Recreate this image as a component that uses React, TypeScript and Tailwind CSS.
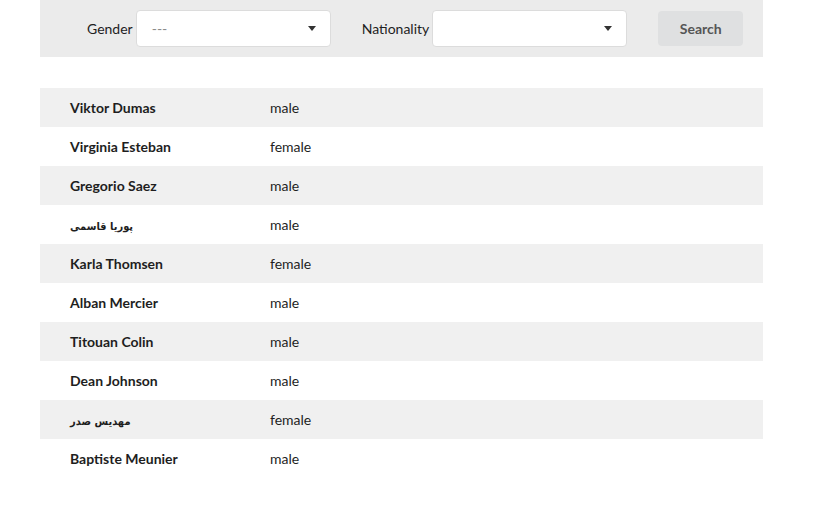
import React from "react";

const people: { name: string; gender: string; rtl?: boolean }[] = [
  { name: "Viktor Dumas", gender: "male" },
  { name: "Virginia Esteban", gender: "female" },
  { name: "Gregorio Saez", gender: "male" },
  { name: "پوریا قاسمی", gender: "male", rtl: true },
  { name: "Karla Thomsen", gender: "female" },
  { name: "Alban Mercier", gender: "male" },
  { name: "Titouan Colin", gender: "male" },
  { name: "Dean Johnson", gender: "male" },
  { name: "مهدیس صدر", gender: "female", rtl: true },
  { name: "Baptiste Meunier", gender: "male" },
];

function Caret() {
  return (
    <svg width="8" height="5" viewBox="0 0 8 5" className="shrink-0">
      <path d="M0 0h8L4 5z" fill="#333" />
    </svg>
  );
}

function Select({ value }: { value?: string }) {
  return (
    <div className="flex h-[37px] w-[195px] items-center justify-between rounded-[4px] border border-[#dcdcdc] bg-white pl-[15px] pr-[14px]">
      <span className="text-[14px] text-[#8a8a8a]">{value ?? ""}</span>
      <Caret />
    </div>
  );
}

export default function App() {
  return (
    <div className="min-h-screen bg-white font-['Lato','DejaVu_Sans',sans-serif] text-[14px] text-[#1e1e1e]">
      <div className="mx-[40px] w-[723px]">
        {/* filter bar */}
        <div className="flex h-[57px] items-center bg-[#ebebeb] pl-[47px]">
          <span className="mr-[3px]">Gender</span>
          <Select value="---" />
          <span className="ml-[31px] mr-[3px]">Nationality</span>
          <Select />
          <button className="ml-[31px] h-[35px] w-[85px] rounded-[4px] bg-[#dfe0e1] font-bold text-[#555]">
            Search
          </button>
        </div>

        {/* results */}
        <div className="mt-[31px]">
          {people.map((p, i) => (
            <div
              key={p.name}
              className={`flex h-[39px] items-center pl-[30px] ${i % 2 === 0 ? "bg-[#f0f0f0]" : "bg-white"}`}
            >
              <span className="w-[200px] font-bold">
                {p.rtl ? (
                  <span className="font-['DejaVu_Sans_Condensed','DejaVu_Sans',sans-serif] text-[11px]">{p.name}</span>
                ) : (
                  p.name
                )}
              </span>
              <span>{p.gender}</span>
            </div>
          ))}
        </div>
      </div>
    </div>
  );
}
